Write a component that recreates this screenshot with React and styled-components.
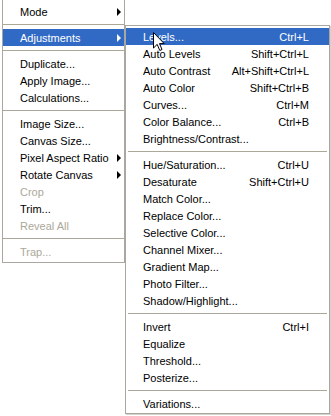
import React from 'react';
import styled, {createGlobalStyle} from 'styled-components';

const GlobalStyle = createGlobalStyle`
  html, body {
    margin: 0;
    padding: 0;
    background: #fff;
  }
  body {
    font-family: "Liberation Sans", Arial, sans-serif;
  }
`;

// menu data
const imageMenu = [
  {label: 'Mode', sub: true},
  '-',
  {label: 'Adjustments', sub: true, active: true},
  '-',
  {label: 'Duplicate...'},
  {label: 'Apply Image...'},
  {label: 'Calculations...'},
  '-',
  {label: 'Image Size...'},
  {label: 'Canvas Size...'},
  {label: 'Pixel Aspect Ratio', sub: true},
  {label: 'Rotate Canvas', sub: true},
  {label: 'Crop', disabled: true},
  {label: 'Trim...'},
  {label: 'Reveal All', disabled: true},
  '-',
  {label: 'Trap...', disabled: true},
];

const adjustMenu = [
  {label: 'Levels...', key: 'Ctrl+L', active: true},
  {label: 'Auto Levels', key: 'Shift+Ctrl+L'},
  {label: 'Auto Contrast', key: 'Alt+Shift+Ctrl+L'},
  {label: 'Auto Color', key: 'Shift+Ctrl+B'},
  {label: 'Curves...', key: 'Ctrl+M'},
  {label: 'Color Balance...', key: 'Ctrl+B'},
  {label: 'Brightness/Contrast...'},
  '-',
  {label: 'Hue/Saturation...', key: 'Ctrl+U'},
  {label: 'Desaturate', key: 'Shift+Ctrl+U'},
  {label: 'Match Color...'},
  {label: 'Replace Color...'},
  {label: 'Selective Color...'},
  {label: 'Channel Mixer...'},
  {label: 'Gradient Map...'},
  {label: 'Photo Filter...'},
  {label: 'Shadow/Highlight...'},
  '-',
  {label: 'Invert', key: 'Ctrl+I'},
  {label: 'Equalize'},
  {label: 'Threshold...'},
  {label: 'Posterize...'},
  '-',
  {label: 'Variations...'},
];

const Screen = styled.div`
  position: relative;
  display: flex;
  align-items: flex-start;
  width: 331px;
  height: 416px;
  overflow: hidden;
  background: #fff;
`;

const Menu = styled.div`
  display: flex;
  flex-direction: column;
  box-sizing: border-box;
  width: ${(p) => p.$width}px;
  margin: ${(p) => p.$margin};
  padding: ${(p) => p.$padding};
  background: #fff;
  border: 1px solid #a9a7a0;
  ${(p) => p.$cut && 'border-top: none;'}
  ${(p) => p.$shadow && 'box-shadow: 1px 1px 0 #d4d2cc;'}
`;

const Item = styled.div`
  display: flex;
  align-items: center;
  height: 17px;
  padding: 0 ${(p) => p.$padRight}px 0 17px;
  font-size: 11px;
  white-space: nowrap;
  color: ${(p) => (p.$disabled ? '#aca899' : p.$active ? '#fff' : '#000')};
  background: ${(p) => (p.$active ? '#316ac5' : 'transparent')};
`;

const Label = styled.span`
  flex: 1;
`;

const Shortcut = styled.span`
  text-align: right;
`;

const Arrow = styled.span`
  width: 0;
  height: 0;
  border-left: 4px solid currentColor;
  border-top: 4px solid transparent;
  border-bottom: 4px solid transparent;
`;

const Separator = styled.div`
  display: flex;
  align-items: center;
  height: 9px;
  margin: 0 ${(p) => p.$inset}px;

  &::before {
    content: '';
    flex: 1;
    height: 1px;
    background: #aca899;
  }
`;

const Cursor = styled.svg`
  position: absolute;
  left: 153px;
  top: 32px;
`;

const renderItems = (items, padRight, inset) =>
  items.map((item, index) =>
    item === '-' ? (
      <Separator key={index} $inset={inset} />
    ) : (
      <Item
        key={index}
        $padRight={padRight}
        $active={item.active}
        $disabled={item.disabled}>
        <Label>{item.label}</Label>
        {item.key && <Shortcut>{item.key}</Shortcut>}
        {item.sub && <Arrow />}
      </Item>
    ),
  );

const App = () => {
  return (
    <Screen>
      <GlobalStyle />
      <Menu $width={123} $margin="0 0 0 2px" $padding="3px 0 2px" $cut>
        {renderItems(imageMenu, 3, 0)}
      </Menu>
      <Menu $width={205} $margin="25px 0 0 0" $padding="2px 0 1px" $shadow>
        {renderItems(adjustMenu, 20, 2)}
      </Menu>
      <Cursor width="12" height="20" viewBox="0 0 12 20">
        <path
          d="M0.5 0.5 L0.5 16 L4.2 12.4 L6.8 18.5 L9 17.5 L6.5 11.6 L11.2 11.6 Z"
          fill="#fff"
          stroke="#000"
          strokeWidth="1"
          strokeLinejoin="miter"
        />
      </Cursor>
    </Screen>
  );
};

export default App;
